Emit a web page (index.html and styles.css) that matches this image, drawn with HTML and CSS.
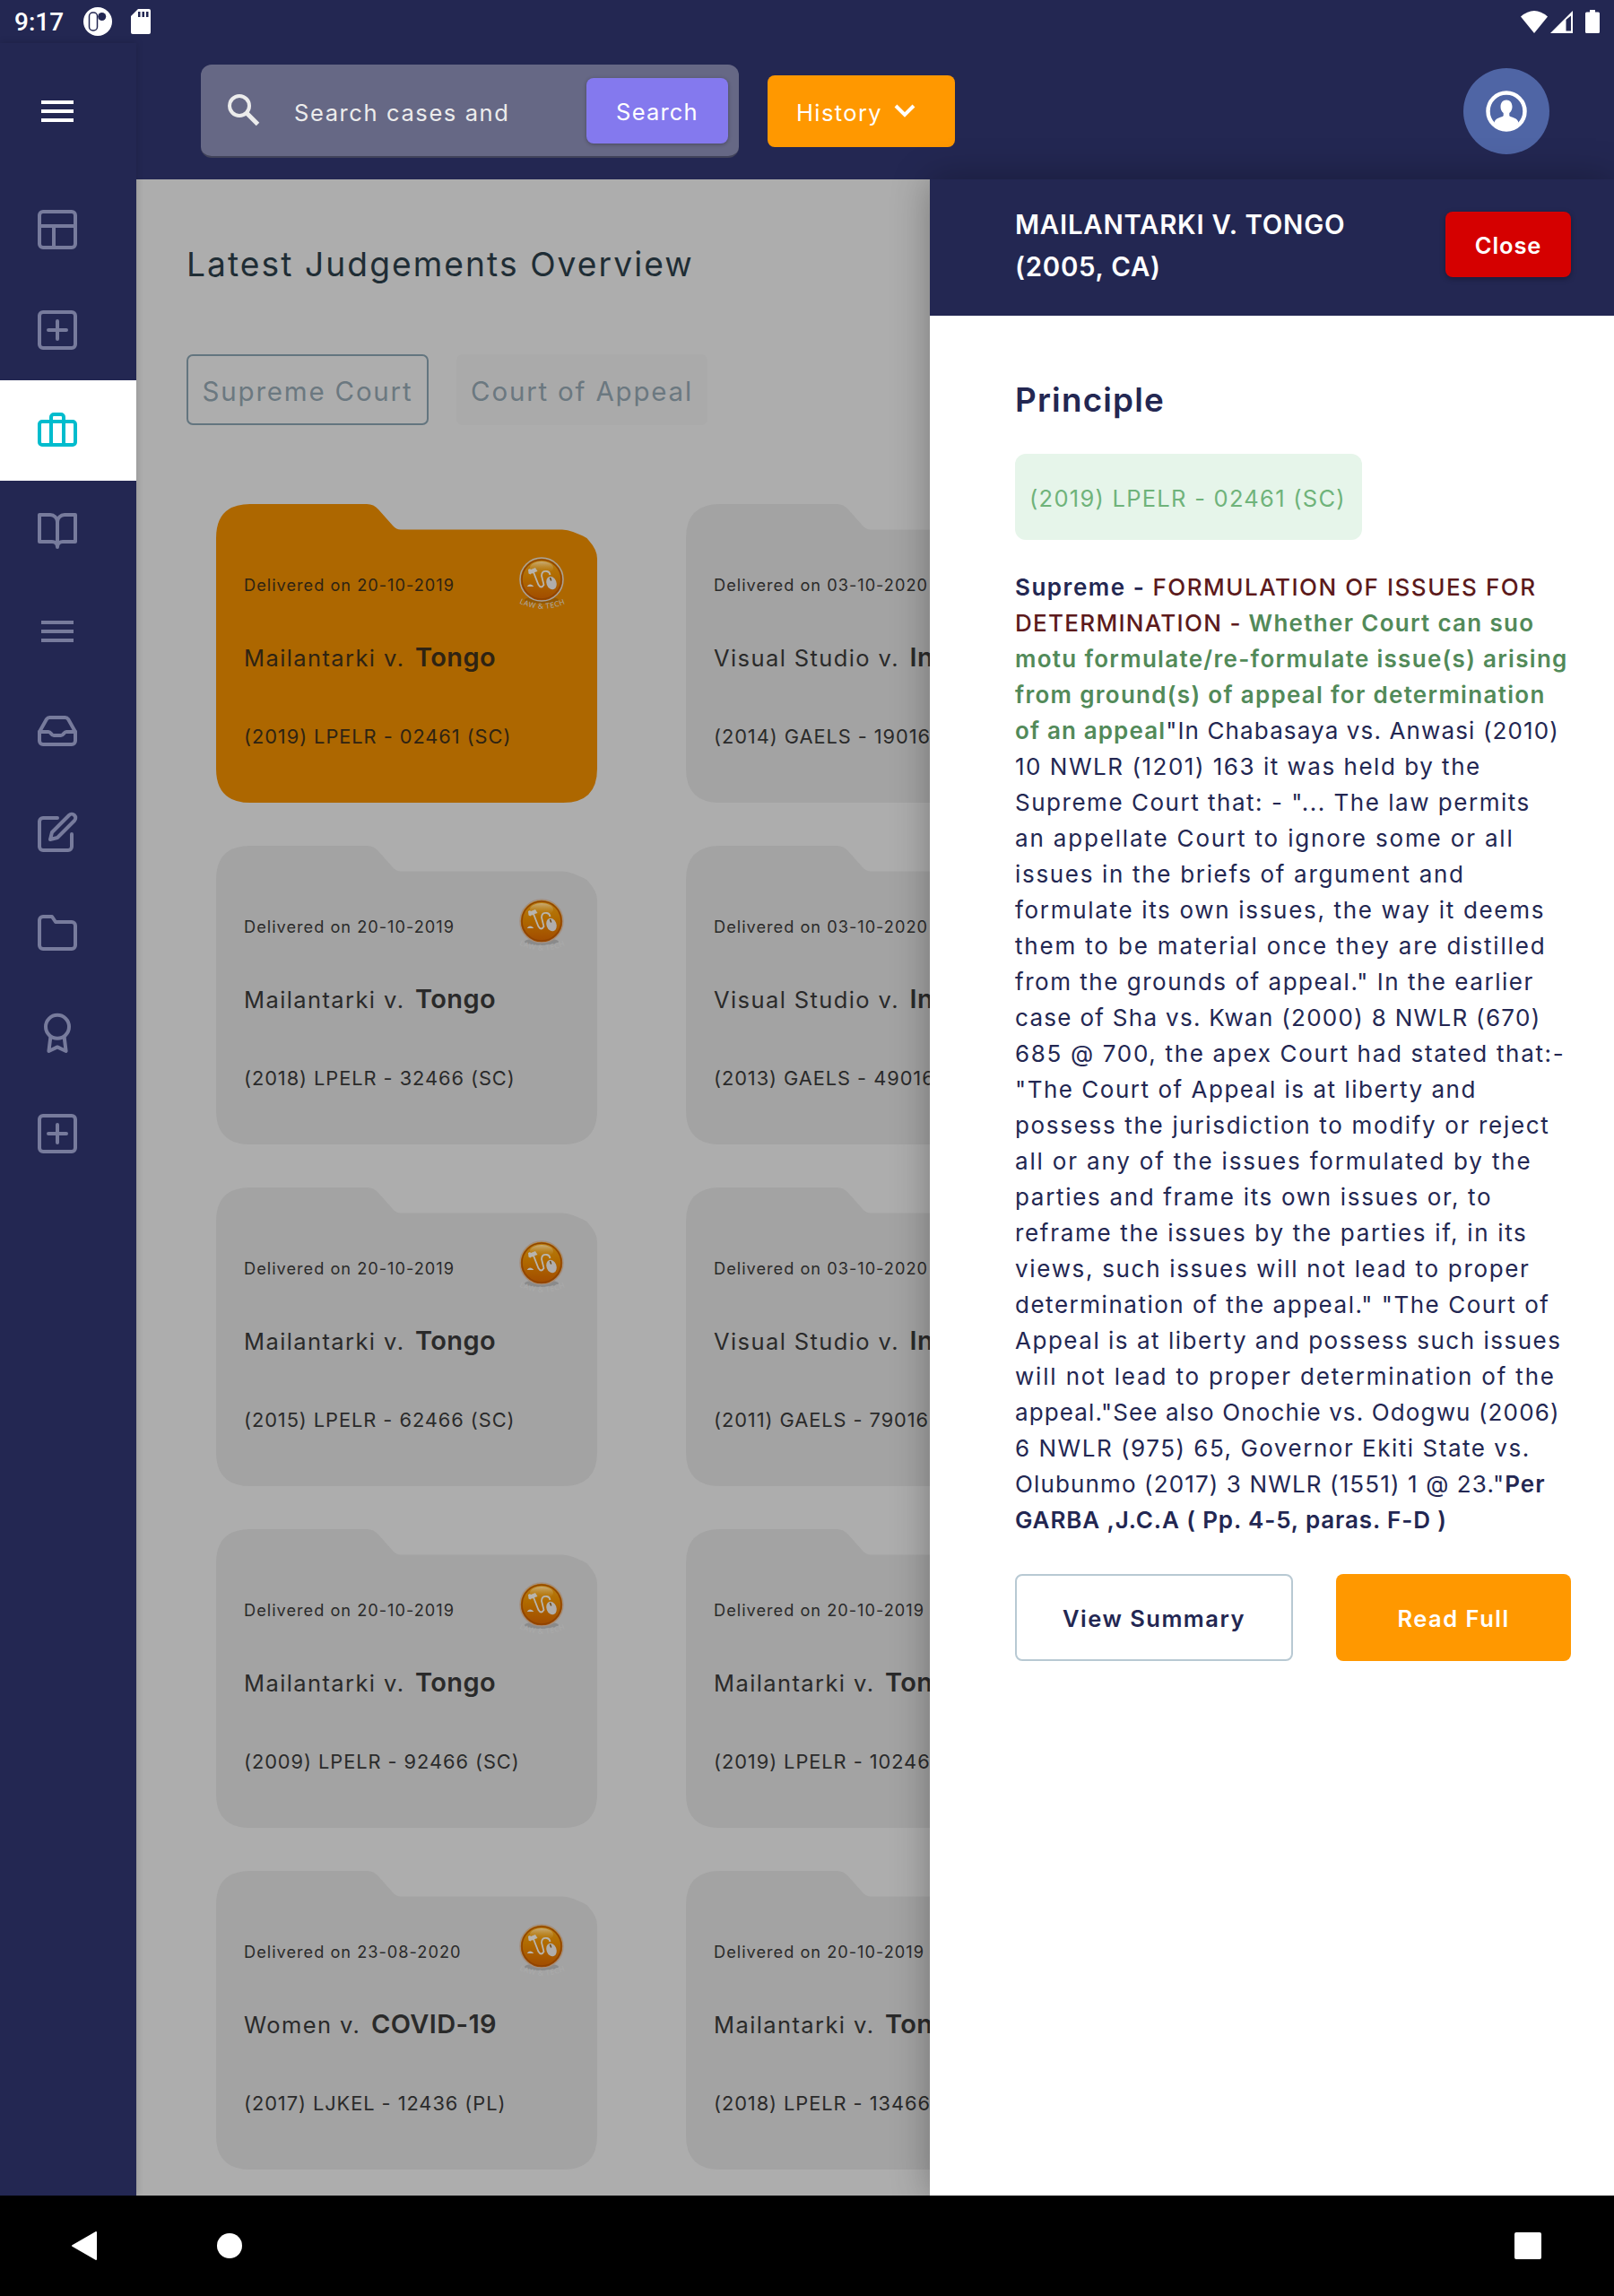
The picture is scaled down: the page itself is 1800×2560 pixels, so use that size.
FILE: index.html
```html
<!DOCTYPE html>
<html lang="en">
<head>
<meta charset="utf-8">
<title>Latest Judgements</title>
<link rel="stylesheet" href="styles.css">
</head>
<body>
<svg class="defs" width="0" height="0">
  <defs>
    <linearGradient id="ball" x1="0" y1="0" x2="0" y2="1">
      <stop offset="0" stop-color="#b97f10"/><stop offset=".45" stop-color="#b06a00"/><stop offset="1" stop-color="#a04a00"/>
    </linearGradient>
    <linearGradient id="shine" x1="0" y1="0" x2="0" y2="1">
      <stop offset="0" stop-color="#c9b184" stop-opacity=".9"/><stop offset="1" stop-color="#b97f10" stop-opacity="0"/>
    </linearGradient>
    <path id="arc" d="M3 54.500Q28 67 56 54.500"/>
    <symbol id="logo" viewBox="0 0 56 64">
      <ellipse cx="28" cy="51" rx="19" ry="4" fill="#000" opacity=".15"/>
      <circle cx="28" cy="28" r="24" fill="url(#ball)" stroke="currentColor" stroke-width="1.500"/>
      <circle cx="28" cy="28" r="22" fill="none" stroke="#8f4300" stroke-width="1.500"/>
      <ellipse cx="28" cy="15" rx="13" ry="7" fill="url(#shine)"/>
      <path d="M13 17l2-1 1 1 5-2 2.500 4-3 1-1 1-3 .5-1 1-2-1zM12 35.500q3-4 7 0v.5h-7z" fill="#b8b4ae"/>
      <path d="M19 20l5.500 14q3 5 6 0l-2.500-10q0-6 6-5 3 .5 3.500 4" fill="none" stroke="#b8b4ae" stroke-width="1.800"/>
      <ellipse cx="39" cy="32" rx="5.500" ry="7.500" transform="rotate(-20 39 32)" fill="#b0aeac"/>
      <path d="M37.500 26l1.200 3.500" stroke="#6b4a1a" stroke-width="1.500"/>
      <text class="logo-text"><textPath href="#arc">LAW &amp; TECH</textPath></text>
    </symbol>
    <symbol id="folder-shape" viewBox="0 0 425 333">
      <path d="M38 0H168Q176 0 181 6L197 24Q201 28.500 206 28.500H386Q392 28.500 398 31L409 35.500Q413 37 416 41Q425 51 425 61V295Q425 333 387 333H38Q0 333 0 295V38Q0 0 38 0Z" fill="currentColor"/>
    </symbol>
  </defs>
</svg>
<div class="screen">
  <div class="statusbar">
    <span class="clock">9:17</span>
    <svg class="st-app" width="32" height="32" viewBox="0 0 32 32"><circle cx="16" cy="16" r="16" fill="#fff"/><rect x="6.500" y="6" width="9" height="20" rx="4" fill="#fff" stroke="#232752" stroke-width="1.500"/><circle cx="20.700" cy="10.500" r="4.500" fill="#232752"/></svg>
    <svg class="st-sd" width="22" height="28" viewBox="0 0 22 28"><path d="M8 0H20a2 2 0 0 1 2 2V26a2 2 0 0 1-2 2H2a2 2 0 0 1-2-2V8Z" fill="#fff"/><path d="M8 3h2.500v6H8zM12.500 3H15v6h-2.500zM17 3h2.500v6H17z" fill="#232752"/></svg>
    <span class="grow"></span>
    <svg width="30" height="25" viewBox="0 0 30 25"><path d="M0 6.500Q15-6.500 30 6.500L15 25Z" fill="#fff"/></svg>
    <svg class="st-cell" width="25" height="25" viewBox="0 0 25 25"><path fill-rule="evenodd" d="M25 0V25H0ZM17.500 10V22.500H23V5.500Z" fill="#fff"/></svg>
    <svg class="st-bat" width="16" height="26" viewBox="0 0 16 26"><path d="M5 0h6v2.500h3.500A1.500 1.500 0 0 1 16 4V24.500A1.500 1.500 0 0 1 14.500 26H1.500A1.500 1.500 0 0 1 0 24.500V4A1.500 1.500 0 0 1 1.500 2.500H5Z" fill="#fff"/></svg>
  </div>
  <div class="app">
    <nav class="sidebar">
      <a class="burger"><svg width="48" height="48" viewBox="0 0 24 24"><path d="M3 6h18v2H3zM3 11h18v2H3zM3 16h18v2H3z" fill="#fff"/></svg></a>
      <a class="item"><svg class="ic" viewBox="0 0 24 24"><rect x="2" y="2" width="20" height="20" rx="2"/><path d="M2 10H22M10 10V22"/></svg></a>
      <a class="item"><svg class="ic" viewBox="0 0 24 24"><rect x="2" y="2" width="20" height="20" rx="2"/><path d="M12 7V17M7 12H17"/></svg></a>
      <a class="item active"><svg class="ic" viewBox="0 0 24 24"><rect x="2" y="7" width="20" height="13" rx="1.500"/><path d="M8.500 20V4.500A1.500 1.500 0 0 1 10 3h4a1.500 1.500 0 0 1 1.500 1.500V20"/></svg></a>
      <a class="item"><svg class="ic" viewBox="0 0 24 24"><path d="M2 3h6a4 4 0 0 1 4 4v14a3 3 0 0 0-3-3H2zM22 3h-6a4 4 0 0 0-4 4v14a3 3 0 0 1 3-3h7z"/></svg></a>
      <a class="item"><svg class="ic flat" viewBox="0 0 24 24"><path d="M3 7H21M3 12H21M3 17H21"/></svg></a>
      <a class="item"><svg class="ic" viewBox="0 0 24 24"><path d="M22 12h-5c-1.500 0-1.500 2-3 2h-4c-1.500 0-1.500-2-3-2H2"/><path d="M6 4.900L2 12v5a2 2 0 0 0 2 2h16a2 2 0 0 0 2-2v-5l-4-7.100A2 2 0 0 0 16.300 4H7.700A2 2 0 0 0 6 4.900z"/></svg></a>
      <a class="item"><svg class="ic" viewBox="0 0 24 24"><path d="M12 4H4a2 2 0 0 0-2 2v14a2 2 0 0 0 2 2h14a2 2 0 0 0 2-2v-7"/><path d="M18.500 2.500a2.100 2.100 0 0 1 3 3L12 15l-4 1 1-4z"/></svg></a>
      <a class="item"><svg class="ic" viewBox="0 0 24 24"><path d="M22 19a2 2 0 0 1-2 2H4a2 2 0 0 1-2-2V5a2 2 0 0 1 2-2h5l2 3h9a2 2 0 0 1 2 2z"/></svg></a>
      <a class="item"><svg class="ic" viewBox="0 0 24 24"><circle cx="12" cy="8.400" r="6.500"/><path d="M8.200 14L7.200 22l4.800-2.300L16.800 22l-1-8"/></svg></a>
      <a class="item"><svg class="ic" viewBox="0 0 24 24"><rect x="2" y="2" width="20" height="20" rx="2"/><path d="M12 7V17M7 12H17"/></svg></a>
    </nav>
    <div class="main">
      <header class="topbar">
        <div class="search">
          <svg width="36" height="36" viewBox="0 0 36 36"><circle cx="13" cy="13" r="11" fill="none" stroke="#ececec" stroke-width="4"/><path d="M21 21L33.500 33.500" stroke="#ececec" stroke-width="5"/></svg>
          <span class="placeholder">Search cases and</span>
          <a class="search-btn">Search</a>
        </div>
        <a class="history"><span>History</span><svg width="24" height="16" viewBox="0 0 24 16"><path d="M2 2L12 12L22 2" fill="none" stroke="#fff" stroke-width="4"/></svg></a>
        <a class="avatar"><svg width="46" height="46" viewBox="0 0 46 46"><circle cx="23" cy="23" r="20.500" fill="none" stroke="#fff" stroke-width="4.500"/><path d="M23 10.500c4 0 6.500 3 6.500 7.500 0 3-1.200 5.500-3.200 7v3c1 2 9.700 2 10.200 8A20 20 0 0 1 23 43 20 20 0 0 1 9.500 36c.5-6 9.200-6 10.200-8v-3c-2-1.500-3.200-4-3.200-7 0-4.500 2.500-7.500 6.500-7.500z" fill="#fff"/></svg></a>
      </header>
      <div class="panes">
      <div class="content">
        <h1>Latest Judgements Overview</h1>
        <div class="tabs"><a class="tab on">Supreme Court</a><a class="tab">Court of Appeal</a></div>
        <div class="cards">
          <article class="card hot"><svg class="shape"><use href="#folder-shape"/></svg><div class="card-top"><span class="date">Delivered on 20-10-2019</span><svg class="logo"><use href="#logo"/></svg></div><p class="name">Mailantarki v. <b>Tongo</b></p><p class="cite">(2019) LPELR - 02461 (SC)</p></article>
          <article class="card"><svg class="shape"><use href="#folder-shape"/></svg><div class="card-top"><span class="date">Delivered on 03-10-2020</span></div><p class="name">Visual Studio v. <b>In</b></p><p class="cite">(2014) GAELS - 19016</p></article>
          <article class="card"><svg class="shape"><use href="#folder-shape"/></svg><div class="card-top"><span class="date">Delivered on 20-10-2019</span><svg class="logo"><use href="#logo"/></svg></div><p class="name">Mailantarki v. <b>Tongo</b></p><p class="cite">(2018) LPELR - 32466 (SC)</p></article>
          <article class="card"><svg class="shape"><use href="#folder-shape"/></svg><div class="card-top"><span class="date">Delivered on 03-10-2020</span></div><p class="name">Visual Studio v. <b>In</b></p><p class="cite">(2013) GAELS - 49016</p></article>
          <article class="card"><svg class="shape"><use href="#folder-shape"/></svg><div class="card-top"><span class="date">Delivered on 20-10-2019</span><svg class="logo"><use href="#logo"/></svg></div><p class="name">Mailantarki v. <b>Tongo</b></p><p class="cite">(2015) LPELR - 62466 (SC)</p></article>
          <article class="card"><svg class="shape"><use href="#folder-shape"/></svg><div class="card-top"><span class="date">Delivered on 03-10-2020</span></div><p class="name">Visual Studio v. <b>In</b></p><p class="cite">(2011) GAELS - 79016</p></article>
          <article class="card"><svg class="shape"><use href="#folder-shape"/></svg><div class="card-top"><span class="date">Delivered on 20-10-2019</span><svg class="logo"><use href="#logo"/></svg></div><p class="name">Mailantarki v. <b>Tongo</b></p><p class="cite">(2009) LPELR - 92466 (SC)</p></article>
          <article class="card"><svg class="shape"><use href="#folder-shape"/></svg><div class="card-top"><span class="date">Delivered on 20-10-2019</span></div><p class="name">Mailantarki v. <b>Ton</b></p><p class="cite">(2019) LPELR - 10246</p></article>
          <article class="card"><svg class="shape"><use href="#folder-shape"/></svg><div class="card-top"><span class="date">Delivered on 23-08-2020</span><svg class="logo"><use href="#logo"/></svg></div><p class="name">Women v. <b>COVID-19</b></p><p class="cite">(2017) LJKEL - 12436 (PL)</p></article>
          <article class="card"><svg class="shape"><use href="#folder-shape"/></svg><div class="card-top"><span class="date">Delivered on 20-10-2019</span></div><p class="name">Mailantarki v. <b>Ton</b></p><p class="cite">(2018) LPELR - 13466</p></article>
        </div>
      </div>
      <aside class="drawer">
        <div class="drawer-head"><h2>MAILANTARKI V. TONGO<br>(2005, CA)</h2><a class="close">Close</a></div>
        <div class="drawer-body">
          <h3>Principle</h3>
          <div class="chip">(2019) LPELR - 02461 (SC)</div>
          <p class="text"><span class="t3"><b>Supreme - <i>FORMULATION OF ISSUES FOR</i></b></span><br>
<span class="t2"><b><i>DETERMINATION -</i> <em>Whether Court can suo</em></b></span><br>
<span class="t2"><b><em>motu formulate/re-formulate issue(s) arising</em></b></span><br>
<span class="t2"><b><em>from ground(s) of appeal for determination</em></b></span><br>
<span class="t1"><b><em>of an appeal</em></b>"In Chabasaya vs. Anwasi (2010)</span><br>
<span class="t3">10 NWLR (1201) 163 it was held by the</span><br>
<span class="t3">Supreme Court that: - "... The law permits</span><br>
<span class="t5">an appellate Court to ignore some or all</span><br>
<span class="t4">issues in the briefs of argument and</span><br>
<span class="t4">formulate its own issues, the way it deems</span><br>
<span class="t5">them to be material once they are distilled</span><br>
<span class="t3">from the grounds of appeal." In the earlier</span><br>
<span class="t2">case of Sha vs. Kwan (2000) 8 NWLR (670)</span><br>
<span class="t4">685 @ 700, the apex Court had stated that:-</span><br>
<span class="t3">"The Court of Appeal is at liberty and</span><br>
<span class="t4">possess the jurisdiction to modify or reject</span><br>
<span class="t5">all or any of the issues formulated by the</span><br>
<span class="t4">parties and frame its own issues or, to</span><br>
<span class="t4">reframe the issues by the parties if, in its</span><br>
<span class="t4">views, such issues will not lead to proper</span><br>
<span class="t3">determination of the appeal." "The Court of</span><br>
<span class="t3">Appeal is at liberty and possess such issues</span><br>
<span class="t5">will not lead to proper determination of the</span><br>
<span class="t1">appeal."See also Onochie vs. Odogwu (2006)</span><br>
<span class="t3">6 NWLR (975) 65, Governor Ekiti State vs.</span><br>
<span class="t1">Olubunmo (2017) 3 NWLR (1551) 1 @ 23."<b>Per</b></span><br>
<span class="t0"><b>GARBA ,J.C.A ( Pp. 4-5, paras. F-D )</b></span></p>
          <div class="actions"><a class="btn-view">View Summary</a><a class="btn-read">Read Full</a></div>
        </div>
      </aside>
      </div>
    </div>
  </div>
  <div class="navbar">
    <svg width="28" height="32" viewBox="0 0 28 32"><path d="M27 1V31L1 16Z" fill="#fff" stroke="#fff" stroke-width="2" stroke-linejoin="round"/></svg>
    <span class="home"></span>
    <span class="recents"></span>
  </div>
</div>
</body>
</html>
```
FILE: styles.css
```css
* { box-sizing: border-box; }
body { margin: 0; background: #000; font-family: Inter, "Liberation Sans", sans-serif; font-size: 25.5px; letter-spacing: 0.9px; }
h1, h2, h3, p { margin: 0; font-weight: 400; }
svg { display: block; flex: none; }
.defs { position: absolute; }
.screen { width: 1800px; height: 2560px; display: flex; flex-direction: column; overflow: hidden; background: #232752; }

.statusbar { height: 48px; display: flex; align-items: center; padding: 0 16px; color: #fff; }
.clock { font: 500 28px/32px Roboto, sans-serif; letter-spacing: 0; width: 77px; padding-top: 2px; }
.st-sd { margin-left: 21px; }
.grow { flex: 1; }
.st-cell { margin-left: 3px; }
.st-bat { margin-left: 14px; }

.app { flex: 1; display: flex; min-height: 0; }
.sidebar { width: 152px; display: flex; flex-direction: column; box-shadow: 0 0 8px rgba(0, 0, 0, .18); position: relative; z-index: 2; }
.burger { height: 152px; padding: 52px 0 0 40px; }
.item { height: 112px; display: flex; align-items: center; padding-left: 40px; color: #777b9c; }
.item.active { background: #fff; color: #00bccd; }
.ic { width: 48px; height: 48px; fill: none; stroke: currentColor; stroke-width: 2; stroke-linecap: round; stroke-linejoin: round; }
.ic.flat { stroke-linecap: butt; }

.main { flex: 1; display: flex; flex-direction: column; min-width: 0; }
.topbar { height: 152px; display: flex; align-items: center; padding: 0 72px; color: #fff; }
.search { width: 600px; height: 104px; border-radius: 12px; background: #666885; border-bottom: 2px solid #41435a; display: flex; align-items: center; padding: 0 12px 0 30px; }
.placeholder { margin-left: 38px; flex: none; color: #ececec; letter-spacing: 1.6px; padding-top: 4px; }
.search-btn { margin-left: auto; width: 158px; height: 73px; border-radius: 8px; background: #8479ee; display: flex; align-items: center; justify-content: center; box-shadow: 0 1px 4px rgba(0, 0, 0, .3); letter-spacing: 1.2px; padding-top: 3px; }
.history { margin-left: 32px; width: 209px; height: 80px; border-radius: 8px; background: #ff9800; display: flex; align-items: center; padding-left: 32px; gap: 13px; letter-spacing: 1.4px; }
.history span { padding-top: 2px; }
.avatar { margin-left: auto; width: 96px; height: 96px; border-radius: 50%; background: #4f65a5; display: flex; align-items: center; justify-content: center; }

.panes { flex: 1; display: flex; min-height: 0; }
.content { width: 885px; background: #adadad; padding: 70px 0 0 56px; overflow: hidden; }
h1 { font-size: 37.2px; line-height: 50px; color: #1f2d35; letter-spacing: 2.05px; }
.tabs { display: flex; gap: 31px; margin-top: 75px; }
.tab { flex: none; height: 79px; width: 270px; border-radius: 7px; display: flex; align-items: center; justify-content: center; font-size: 29.5px; letter-spacing: 1.8px; color: #6b7880; background: #aaaaaa; padding-top: 3px; }
.tab:last-child { width: 280px; }
.tab.on { background: none; border: 2px solid #63757f; padding-top: 2px; }
.cards { display: grid; grid-template-columns: 425px 425px; column-gap: 99px; row-gap: 48px; margin: 88px 0 0 33px; }
.card { position: relative; height: 333px; padding: 56px 34px 0 31px; color: #2a2a2a; white-space: nowrap; }
.card > * { position: relative; }
.card .shape { position: absolute; left: 0; top: 0; width: 425px; height: 333px; color: #a3a3a3; }
.card.hot { color: #2e2313; }
.card.hot .shape { color: #ad6700; }
.card-top { height: 64px; display: flex; justify-content: space-between; }
.date { font-size: 18.2px; line-height: 24px; padding-top: 22px; letter-spacing: 1px; }
.logo { width: 56px; height: 64px; color: #a38f80; overflow: visible; }
.logo-text { font: 8.4px "Open Sans", sans-serif; letter-spacing: .5px; fill: #ababab; }
.card.hot .logo { color: #a8a29c; }
.card.hot .logo-text { fill: #b8a994; }
.name { height: 40px; margin-top: 31px; line-height: 40px; letter-spacing: 1.4px; }
.name b { font-size: 29px; font-weight: 600; letter-spacing: .4px; margin-left: 3px; }
.cite { margin-top: 53px; font-size: 21.8px; line-height: 30px; letter-spacing: .95px; }

.drawer { position: relative; width: 763px; background: #fff; color: #232752; box-shadow: 0 0 40px rgba(0, 0, 0, .3); }
.drawer-head { height: 152px; background: #232752; color: #fff; display: flex; align-items: center; justify-content: space-between; padding: 0 48px 0 95px; }
h2 { font-size: 29.4px; line-height: 47px; font-weight: 600; letter-spacing: .75px; padding-bottom: 4px; }
.close { width: 140px; height: 73px; border-radius: 8px; background: #d50000; font-weight: 600; display: flex; align-items: center; justify-content: center; margin-top: -7px; padding-top: 1px; box-shadow: 0 2px 6px rgba(0, 0, 0, .3); }
.drawer-body { padding: 64px 48px 0 95px; }
h3 { font-size: 36.8px; line-height: 60px; font-weight: 600; letter-spacing: 1.2px; }
.chip { margin-top: 30px; width: 387px; height: 96px; border-radius: 12px; background: #e6f5ea; color: #6fb37a; display: flex; align-items: center; padding: 2px 0 0 16px; letter-spacing: 1.27px; }
.text { margin-top: 33px; line-height: 40px; font-size: 26px; white-space: nowrap; }
.text b { font-weight: 600; }
.text i { font-style: normal; color: #5c1a1c; font-weight: 500; }
.text em { font-style: normal; color: #528a59; }
.t0 { letter-spacing: .88px; }
.t1 { letter-spacing: 1.13px; }
.t2 { letter-spacing: 1.3px; }
.t3 { letter-spacing: 1.52px; }
.t4 { letter-spacing: 1.68px; }
.t5 { letter-spacing: 1.83px; }
.actions { display: flex; justify-content: space-between; margin-top: 40px; }
.actions a { height: 97px; border-radius: 8px; display: flex; align-items: center; justify-content: center; font-weight: 600; padding-top: 1px; letter-spacing: 1.5px; }
.btn-view { width: 310px; border: 2px solid #b8c9d3; }
.btn-read { width: 262px; background: #ff9800; color: #fff; }

.navbar { height: 112px; background: #000; display: flex; align-items: center; padding: 0 81px 0 80px; }
.home { width: 28px; height: 28px; border-radius: 50%; background: #fff; margin-left: 134px; }
.recents { width: 30px; height: 30px; border-radius: 2px; background: #fff; margin-left: auto; }
```
